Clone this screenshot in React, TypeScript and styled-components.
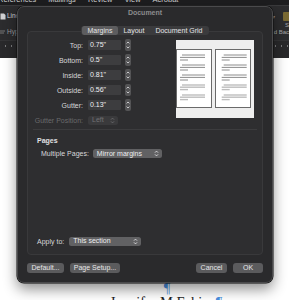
import * as React from 'react';
import styled, { createGlobalStyle } from 'styled-components';

const GlobalStyle = createGlobalStyle`
  html, body {
    margin: 0;
    padding: 0;
    background: #2b2b2d;
  }
  body {
    font-family: "Liberation Sans", Arial, sans-serif;
  }
`;

const margins = [
    { label: 'Top:', value: '0.75"' },
    { label: 'Bottom:', value: '0.5"' },
    { label: 'Inside:', value: '0.81"' },
    { label: 'Outside:', value: '0.56"' },
    { label: 'Gutter:', value: '0.13"' },
];

const menus = ['References', 'Mailings', 'Review', 'View', 'Acrobat'];

const Stepper = (): JSX.Element =>
    <StepperBox>
        <svg width="6" height="12" viewBox="0 0 6 12">
            <path d="M1.6 4.4 L3 3 L4.4 4.4 M1.6 7.6 L3 9 L4.4 7.6" stroke="#d6d6d8" strokeWidth="0.9" fill="none" />
        </svg>
    </StepperBox>
;

const Chevrons = ({ color }: { color: string }): JSX.Element =>
    <svg width="5" height="7" viewBox="0 0 5 7">
        <path d="M1 2.6 L2.5 1.1 L4 2.6 M1 4.4 L2.5 5.9 L4 4.4" stroke={color} strokeWidth="0.9" fill="none" />
    </svg>
;

const PagePreview = (): JSX.Element =>
    <svg width="78" height="78" viewBox="0 0 78 78">
        <rect width="78" height="78" fill="#eeeeee" />
        {[{ x: 0, indent: 4 }, { x: 39, indent: 6.7 }].map(p =>
            <g key={p.x}>
                <rect x={p.x + 0.5} y="9.5" width="35" height="58" fill="#ffffff" stroke="#6a6a6a" />
                {[15, 25, 35].map(y =>
                    <g key={y} stroke="#6e6e6e" strokeWidth="0.8">
                        <line x1={p.x + p.indent + 2} y1={y} x2={p.x + p.indent + 25} y2={y} />
                        <line x1={p.x + p.indent} y1={y + 2.4} x2={p.x + p.indent + 25} y2={y + 2.4} />
                        <line x1={p.x + p.indent} y1={y + 5} x2={p.x + p.indent + 8} y2={y + 5} />
                    </g>
                )}
                {[45, 55].map(y =>
                    <g key={y} stroke="#bdbdbd" strokeWidth="1.4">
                        <line x1={p.x + p.indent + 2} y1={y} x2={p.x + p.indent + 25} y2={y} />
                        <line x1={p.x + p.indent} y1={y + 2.2} x2={p.x + p.indent + 25} y2={y + 2.2} />
                        <line x1={p.x + p.indent} y1={y + 4.6} x2={p.x + p.indent + 8} y2={y + 4.6} />
                    </g>
                )}
            </g>
        )}
    </svg>
;

export default function App(): JSX.Element {
    return (
        <>
            <GlobalStyle />
            <Screen>
                <MenuBar>
                    {menus.map(m => <MenuItem key={m}>{m}</MenuItem>)}
                </MenuBar>
                <Toolbar>
                    <ToolColumn>
                        <ToolItem>
                            <svg width="6" height="7" viewBox="0 0 6 7">
                                <path d="M0.5 0.5 H4 L5.5 2 V6.5 H0.5 Z" fill="#cfcfd1" />
                            </svg>
                            Line
                        </ToolItem>
                        <ToolItem $dim>
                            <svg width="6" height="5" viewBox="0 0 6 5">
                                <path d="M0 1 H5 M0 3 H4" stroke="#8a8a8c" strokeWidth="0.8" />
                            </svg>
                            Hyp
                        </ToolItem>
                    </ToolColumn>
                    <ToolColumn $right>
                        <ToolItem>
                            <Caret>▾</Caret>
                            <YellowIcon />
                        </ToolItem>
                        <SmallLabel>S</SmallLabel>
                        <SmallLabel>d Bac</SmallLabel>
                    </ToolColumn>
                </Toolbar>
                <Ruler>
                    <Ticks />
                </Ruler>
                <DocPage>
                    <DocLine><Mark>¶</Mark></DocLine>
                    <DocLine>Jennifer M Fahim<Mark>¶</Mark></DocLine>
                </DocPage>

                <Dialog>
                    <TitleBar>Document</TitleBar>
                    <Body>
                        <Tabs>
                            <Tab $active>Margins</Tab>
                            <Tab>Layout</Tab>
                            <Tab>Document Grid</Tab>
                        </Tabs>
                        <Panel>
                            <TopSection>
                                <Fields>
                                    {margins.map(m =>
                                        <FieldRow key={m.label}>
                                            <Label>{m.label}</Label>
                                            <Field>{m.value}</Field>
                                            <Stepper />
                                        </FieldRow>
                                    )}
                                    <FieldRow>
                                        <Label $disabled>Gutter Position:</Label>
                                        <Popup $disabled $width={30} $offset={5}>
                                            Left
                                            <Chevrons color="#6c6c6e" />
                                        </Popup>
                                    </FieldRow>
                                </Fields>
                                <Preview>
                                    <PagePreview />
                                </Preview>
                            </TopSection>
                            <Separator />
                            <SectionTitle>Pages</SectionTitle>
                            <OptionRow $indent={13}>
                                <OptionLabel>Multiple Pages:</OptionLabel>
                                <Popup $width={69} $offset={4}>
                                    Mirror margins
                                    <Chevrons color="#e4e4e6" />
                                </Popup>
                            </OptionRow>
                            <Spacer />
                            <OptionRow $indent={9}>
                                <OptionLabel>Apply to:</OptionLabel>
                                <Popup $width={72} $offset={5}>
                                    This section
                                    <Chevrons color="#e4e4e6" />
                                </Popup>
                            </OptionRow>
                        </Panel>
                        <Footer>
                            <ButtonGroup>
                                <Button $width={37}>Default...</Button>
                                <Button $width={50}>Page Setup...</Button>
                            </ButtonGroup>
                            <ButtonGroup>
                                <Button $width={31}>Cancel</Button>
                                <Button $width={30}>OK</Button>
                            </ButtonGroup>
                        </Footer>
                    </Body>
                </Dialog>
            </Screen>
        </>
    );
}

const Screen = styled.div`
    position: relative;
    width: 289px;
    height: 300px;
    overflow: hidden;
    display: flex;
    flex-direction: column;
    background: #2b2b2d;
`;

const MenuBar = styled.div`
    flex: none;
    height: 5px;
    display: flex;
    gap: 12px;
    margin-left: -2px;
    overflow: hidden;
    background: #1d1d1f;
    color: #cfcfd1;
    font-size: 7.5px;
    line-height: 8px;
`;

const MenuItem = styled.span`
    margin-top: -4px;
    white-space: nowrap;
`;

const Toolbar = styled.div`
    flex: none;
    height: 35px;
    display: flex;
    justify-content: space-between;
    background: #2c2c2e;
    border-top: 1px solid #3a3a3c;
    box-sizing: border-box;
`;

const ToolColumn = styled.div<{ $right?: boolean }>`
    display: flex;
    flex-direction: column;
    align-items: ${p => p.$right ? 'flex-end' : 'flex-start'};
    gap: ${p => p.$right ? '1px' : '8px'};
    width: 17px;
    padding-top: 6px;
    overflow: hidden;
`;

const ToolItem = styled.div<{ $dim?: boolean }>`
    display: flex;
    align-items: center;
    gap: 1px;
    font-size: 6.5px;
    line-height: 8px;
    color: ${p => p.$dim ? '#9a9a9c' : '#d4d4d6'};
    white-space: nowrap;
`;

const Caret = styled.span`
    font-size: 6px;
    color: #8a8a8c;
    margin-right: 7px;
`;

const YellowIcon = styled.div`
    width: 6px;
    height: 9px;
    background: #7a6a33;
    border-radius: 1px 0 0 1px;
`;

const SmallLabel = styled.div`
    font-size: 6px;
    line-height: 6px;
    color: #a8a8aa;
    white-space: nowrap;
`;

const Ruler = styled.div`
    flex: none;
    height: 18px;
    background: #29292b;
    border-top: 1px solid #343436;
    box-sizing: border-box;
`;

const Ticks = styled.div`
    margin-top: 4px;
    height: 2px;
    background: repeating-linear-gradient(90deg, transparent 0 5px, #7a7a7c 5px 6px);
`;

const DocPage = styled.div`
    flex: 1;
    background: #ffffff;
    padding: 223px 0 0 43px;
    text-align: center;
    font-family: "Liberation Serif", "Times New Roman", serif;
    font-size: 14.5px;
    line-height: 14px;
    color: #1e1e1e;
`;

const DocLine = styled.div`
    white-space: nowrap;
`;

const Mark = styled.span`
    color: #4a8fe0;
    margin-left: 2px;
`;

const Dialog = styled.div`
    position: absolute;
    left: 17px;
    top: 6px;
    width: 256px;
    height: 277px;
    box-sizing: border-box;
    display: flex;
    flex-direction: column;
    background: #2a2a2c;
    border: 1px solid #4a4a4c;
    border-radius: 7px;
    box-shadow: 0 0 0 0.5px #0c0c0c, 0 6px 14px rgba(0, 0, 0, 0.45);
    font-size: 7px;
    color: #dcdcde;
`;

const TitleBar = styled.div`
    flex: none;
    height: 11px;
    line-height: 12px;
    text-align: center;
    font-weight: 700;
    color: #8c8c8e;
`;

const Body = styled.div`
    flex: 1;
    display: flex;
    flex-direction: column;
    padding: 0 9px 9px;
`;

const Tabs = styled.div`
    position: relative;
    z-index: 1;
    align-self: center;
    display: flex;
    margin-top: 8px;
    height: 9px;
    padding: 0 1px;
    background: #3b3b3d;
    border-radius: 3px;
`;

const Tab = styled.div<{ $active?: boolean }>`
    padding: 0 5.5px;
    line-height: 9px;
    border-radius: 2.5px;
    color: #e4e4e6;
    background: ${p => p.$active ? '#5d5d5f' : 'transparent'};
`;

const Panel = styled.div`
    flex: 1;
    display: flex;
    flex-direction: column;
    margin-top: -4px;
    padding: 8px 0 8px;
    background: #2e2e30;
    border: 1px solid #39393b;
    border-radius: 4px;
`;

const TopSection = styled.div`
    display: flex;
    justify-content: space-between;
    padding-right: 8px;
`;

const Fields = styled.div`
    display: flex;
    flex-direction: column;
    gap: 5.1px;
`;

const FieldRow = styled.div`
    display: flex;
    align-items: center;
    height: 10px;
`;

const Label = styled.div<{ $disabled?: boolean }>`
    width: 55px;
    text-align: right;
    white-space: nowrap;
    color: ${p => p.$disabled ? '#6a6a6c' : '#d8d8da'};
`;

const Field = styled.div`
    width: 33px;
    height: 10px;
    margin-left: 5px;
    padding-left: 2px;
    box-sizing: border-box;
    line-height: 10px;
    background: #3d3d3f;
    color: #f0f0f2;
    border-radius: 1px;
`;

const StepperBox = styled.div`
    display: flex;
    margin-left: 4px;
    width: 6px;
    height: 12px;
    background: #545456;
    border-radius: 2px;
`;

const Popup = styled.div<{ $disabled?: boolean; $width: number; $offset: number }>`
    display: flex;
    align-items: center;
    justify-content: space-between;
    width: ${p => p.$width}px;
    height: 9.5px;
    margin-left: ${p => p.$offset}px;
    padding: 0 3px 0 4px;
    box-sizing: border-box;
    border-radius: 2.5px;
    line-height: 10px;
    white-space: nowrap;
    background: ${p => p.$disabled ? '#3a3a3c' : '#616163'};
    color: ${p => p.$disabled ? '#717173' : '#eeeef0'};
`;

const Preview = styled.div`
    display: flex;
    width: 78px;
    height: 78px;
`;

const Separator = styled.div`
    height: 1px;
    margin: 4px 5px 0;
    background: #3c3c3e;
`;

const SectionTitle = styled.div`
    margin: 6px 0 0 9px;
    line-height: 9px;
    font-weight: 700;
    color: #e0e0e2;
`;

const OptionRow = styled.div<{ $indent: number }>`
    display: flex;
    align-items: center;
    margin-top: 3.5px;
    padding-left: ${p => p.$indent}px;
`;

const OptionLabel = styled.div`
    white-space: nowrap;
    color: #d8d8da;
`;

const Spacer = styled.div`
    flex: 1;
`;

const Footer = styled.div`
    flex: none;
    display: flex;
    justify-content: space-between;
    margin-top: 8px;
`;

const ButtonGroup = styled.div`
    display: flex;
    gap: 6px;
`;

const Button = styled.div<{ $width: number }>`
    width: ${p => p.$width}px;
    height: 10px;
    line-height: 10px;
    text-align: center;
    white-space: nowrap;
    border-radius: 3px;
    background: #5b5b5d;
    color: #e6e6e8;
`;
